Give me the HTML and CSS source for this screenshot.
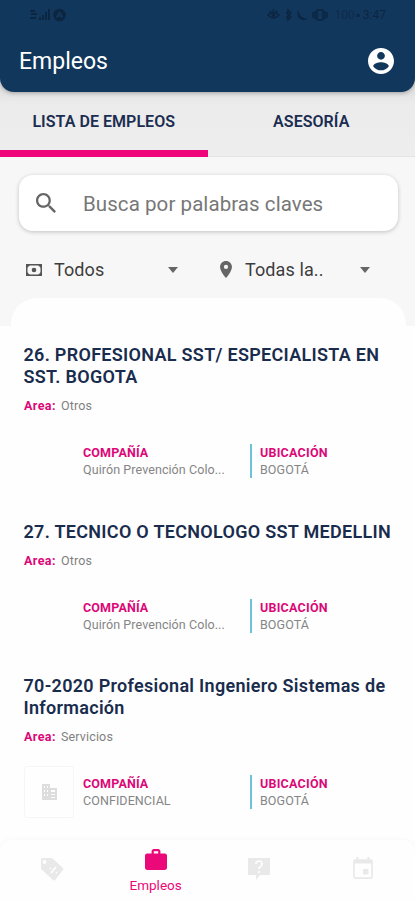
FILE: index.html
```html
<!DOCTYPE html>
<html lang="es">
<head>
<meta charset="utf-8">
<title>Empleos</title>
<link rel="stylesheet" href="styles.css">
</head>
<body>
<div class="app">
  <header class="header">
    <div class="status">
      <svg class="signal" viewBox="0 0 36 14"><path d="M0 2h5v2H0zM1 5h6v2H1zM0 9h6v2H0zM9 9h2v3H9zM12 7h2v5h-2zM15 4h2v8h-2zM18 1h2v11h-2z"/><circle cx="29.500" cy="7" r="6.300"/><path class="cut" d="M26.500 9.500l3-5 3 5M28 8h3"/></svg>
      <span class="status-right">
        <svg class="status-icons" viewBox="0 0 62 14"><path class="line" d="M1 7q5.500-6 11 0q-5.500 6-11 0zM3 3l1 2M10 3L9 5M6.500 1v2M19 4l5 5-3 3V2l3 3-5 5M46 4v6M60 4v6M48 3v8M58 3v8M50 2h6v10h-6z"/><circle cx="6.500" cy="7" r="2"/><path d="M32 2a6 6 0 1 0 9 8a7 7 0 0 1-9-8z"/></svg>
        <span class="battery">100</span><span class="clock">▪ 3:47</span>
      </span>
    </div>
    <div class="titlebar">
      <h1>Empleos</h1>
      <svg class="account" viewBox="2 2 20 20"><path d="M12 2C6.480 2 2 6.480 2 12s4.480 10 10 10 10-4.480 10-10S17.520 2 12 2zm0 3c1.660 0 3 1.340 3 3s-1.340 3-3 3-3-1.340-3-3 1.340-3 3-3zm0 14.200c-2.500 0-4.710-1.280-6-3.220.030-1.990 4-3.080 6-3.080 1.990 0 5.970 1.090 6 3.080-1.290 1.940-3.500 3.220-6 3.220z"/></svg>
    </div>
  </header>
  <nav class="tabs">
    <div class="tab active"><span>LISTA DE EMPLEOS</span></div>
    <div class="tab"><span>ASESORÍA</span></div>
  </nav>
  <section class="filters">
    <div class="search">
      <svg viewBox="3 3 17.500 17.500"><path d="M15.500 14h-.790l-.280-.270C15.410 12.590 16 11.110 16 9.500 16 5.910 13.090 3 9.500 3S3 5.910 3 9.500 5.910 16 9.500 16c1.610 0 3.090-.590 4.230-1.570l.270.280v.790l5 4.990L20.490 19l-4.990-5zm-6 0C7.010 14 5 11.990 5 9.500S7.010 5 9.500 5 14 7.010 14 9.500 11.990 14 9.500 14z"/></svg>
      <span>Busca por palabras claves</span>
    </div>
    <div class="selects">
      <div class="select">
        <svg class="money" viewBox="0 0 16 12"><path fill-rule="evenodd" d="M0 0h16v12H0zM1.500 1.500v9h13v-9z"/><path d="M1 1h3L1 4zM15 1v3l-3-3zM1 11V8l3 3zM15 11h-3l3-3z"/><circle cx="8" cy="6" r="2.300"/></svg>
        <span>Todos</span><i class="caret"></i>
      </div>
      <div class="select place">
        <svg class="pin" viewBox="5 2 14 20"><path d="M12 2C8.130 2 5 5.130 5 9c0 5.250 7 13 7 13s7-7.750 7-13c0-3.870-3.130-7-7-7zm0 9.500a2.500 2.500 0 0 1 0-5 2.500 2.500 0 0 1 0 5z"/></svg>
        <span>Todas la..</span><i class="caret"></i>
      </div>
    </div>
    <div class="sheet-top"></div>
  </section>
  <main class="jobs">
    <article class="job">
      <h2>26. PROFESIONAL SST/ ESPECIALISTA EN<br>SST. BOGOTA</h2>
      <p class="area"><b>Area:</b><span>Otros</span></p>
      <div class="details">
        <div class="logo"></div>
        <div class="company"><b>COMPAÑÍA</b><span>Quirón Prevención Colo...</span></div>
        <div class="location"><b>UBICACIÓN</b><span>BOGOTÁ</span></div>
      </div>
    </article>
    <article class="job">
      <h2>27. TECNICO O TECNOLOGO SST MEDELLIN</h2>
      <p class="area"><b>Area:</b><span>Otros</span></p>
      <div class="details">
        <div class="logo"></div>
        <div class="company"><b>COMPAÑÍA</b><span>Quirón Prevención Colo...</span></div>
        <div class="location"><b>UBICACIÓN</b><span>BOGOTÁ</span></div>
      </div>
    </article>
    <article class="job">
      <h2>70-2020 Profesional Ingeniero Sistemas de<br>Información</h2>
      <p class="area"><b>Area:</b><span>Servicios</span></p>
      <div class="details">
        <div class="logo framed"><svg viewBox="0 0 15 16"><path fill-rule="evenodd" d="M0 0h8v4h7v12H0zM2 2v2h1V2zm3 0v2h1V2zM2 6v2h1V6zm3 0v2h1V6zM2 10v2h1v-2zm3 0v2h1v-2zM9 6v2h4V6zm0 4v1h4v-1zm0 3v1h4v-1z"/></svg></div>
        <div class="company"><b>COMPAÑÍA</b><span>CONFIDENCIAL</span></div>
        <div class="location"><b>UBICACIÓN</b><span>BOGOTÁ</span></div>
      </div>
    </article>
  </main>
  <footer class="bottom">
    <div class="item"><svg class="tag" viewBox="0 0 24 24"><path fill-rule="evenodd" d="M2 1h10l11 10q1 1 0 2l-8 10q-1 1-2 0L1 12V2q0-1 1-1zM4.500 3a2 2 0 1 0 0 4 2 2 0 0 0 0-4z"/><path class="mark" d="M11 16l5-6M10 11l1 1M16 15l1 1"/></svg></div>
    <div class="item current"><svg class="bag" viewBox="2 2 20 19"><path fill-rule="evenodd" d="M20 6h-4V4c0-1.110-.890-2-2-2h-4c-1.110 0-2 .890-2 2v2H4c-1.110 0-2 .890-2 2v11c0 1.110.890 2 2 2h16c1.110 0 2-.890 2-2V8c0-1.110-.890-2-2-2zm-6 0h-4V4h4v2z"/></svg><span>Empleos</span></div>
    <div class="item"><svg class="help" viewBox="0 0 24 24"><path d="M1 1h22v17H13l-4 5v-5H1z"/><path class="mark" d="M9 7q0-3 3-3t3 3q0 2-3 4v1M12 14v2"/></svg></div>
    <div class="item"><svg class="calendar" viewBox="3 1 18 20"><path d="M16 1v2H8V1H6v2H5c-1.110 0-2 .900-2 2v14c0 1.100.890 2 2 2h14c1.100 0 2-.900 2-2V5c0-1.100-.900-2-2-2h-1V1h-2zm3.500 18.500h-15V7h15v12.500zM12 12h5v5h-5z"/></svg></div>
  </footer>
</div>
</body>
</html>
```
FILE: styles.css
```css
* { box-sizing: border-box; }
body { margin: 0; background: #fefefe; font-family: Roboto, sans-serif; }
h1, h2, p { margin: 0; }
svg { display: block; fill: currentColor; flex: none; }
.app { width: 415px; height: 900px; overflow: hidden; display: flex; flex-direction: column; }

.header { height: 92px; flex: none; background: #12375c; border-radius: 0 0 14px 14px; box-shadow: 0 1px 4px rgba(0,0,0,.3); z-index: 1; color: #fff; }
.status { height: 30px; padding: 8px 29px 0 30px; display: flex; justify-content: space-between; color: #0c2642; font-size: 12px; line-height: 14px; }
.signal { width: 36px; height: 14px; }
.cut { fill: none; stroke: #12375c; stroke-width: 1.500; }
.status-right { display: flex; }
.status-icons { width: 62px; height: 14px; margin-right: 5px; }
.line { fill: none; stroke: currentColor; stroke-width: 1.500; }
.battery { opacity: .65; }
.clock { margin-left: 1px; }
.titlebar { height: 62px; padding: 1px 21px 0 19px; display: flex; align-items: center; justify-content: space-between; }
h1 { font-size: 23px; font-weight: 400; }
.account { width: 26px; height: 26px; margin-top: -1px; }

.tabs { height: 80px; margin-top: -15px; padding-top: 15px; flex: none; display: flex; background: linear-gradient(#e2e2e2 15px, #ebebeb 26px, #eee); border-bottom: 1px solid #e5e5e5; color: #1b2d50; }
.tab { flex: 1; height: 65px; padding-top: 20px; text-align: center; font-size: 16px; line-height: 20px; font-weight: 600; letter-spacing: .05px; border-bottom: 7px solid transparent; }
.tab.active { border-color: #ef047c; }

.filters { height: 169px; flex: none; background: #f7f7f7; padding-top: 18px; display: flex; flex-direction: column; }
.search { height: 56px; flex: none; margin: 0 17px 0 19px; padding: 2px 0 0 17px; display: flex; align-items: center; background: #fff; border-radius: 14px; box-shadow: 0 1px 4px rgba(0,0,0,.22); color: #777; font-size: 20.500px; letter-spacing: .07px; }
.search svg { width: 20px; height: 20px; margin: -2px 27px 0 0; color: #666; }
.selects { height: 67px; flex: none; display: flex; padding: 5px 44px 0 26px; color: #3d3d3d; font-size: 18px; letter-spacing: .1px; }
.select { width: 152px; height: 67px; display: flex; align-items: center; }
.money { width: 16px; height: 12px; margin-right: 12px; color: #555; }
.place { margin-left: 42px; width: 150px; }
.pin { width: 12px; height: 17px; margin-right: 13px; color: #666; }
.caret { margin-left: auto; border: 5px solid transparent; border-top: 6px solid #666; border-bottom: 0; }
.sheet-top { height: 28px; flex: none; margin: 0 9px 0 11px; border-radius: 26px 26px 0 0; background: #fefefe; }

.jobs { height: 514px; flex: none; padding: 18px 15px 0 24px; overflow: hidden; }
.job { height: 177px; }
.job:nth-child(2) { height: 154px; }
h2 { font-size: 18px; line-height: 22px; font-weight: 600; letter-spacing: .3px; color: #192c4d; white-space: nowrap; margin-left: -.5px; }
.area { height: 15px; margin-top: 10px; display: flex; font-size: 12.500px; line-height: 15px; color: #818181; }
.area b { width: 37px; letter-spacing: .4px; }
.area span { letter-spacing: .15px; }
.area b, .details b { color: #dc0877; font-weight: 700; }
.details { display: flex; align-items: center; height: 54px; margin-top: 21px; }
.logo { width: 50px; height: 52px; display: flex; align-items: center; justify-content: center; color: #ddd; }
.framed { border: 1px solid #f6f6f6; border-radius: 3px; }
.logo svg { width: 15px; height: 16px; }
.company, .location { display: flex; flex-direction: column; font-size: 12.500px; line-height: 17px; letter-spacing: .08px; color: #858585; white-space: nowrap; }
.company { width: 176px; padding-left: 9px; }
.company b { letter-spacing: .15px; }
.location { border-left: 2px solid #6cc3d5; padding-left: 8px; }
.location b { letter-spacing: .25px; }

.bottom { height: 60px; flex: none; display: grid; grid-template-columns: repeat(4, 1fr); color: #e9e9e9; background: #fefefe; box-shadow: 0 -1px 4px rgba(0,0,0,.03); border-radius: 12px 12px 0 0; }
.item { display: flex; flex-direction: column; align-items: center; padding-top: 17px; }
.item.current { padding-top: 9px; color: #eb0878; font-size: 13.500px; line-height: 16px; gap: 7px; }
.tag, .help { width: 24px; height: 24px; }
.bag { width: 22px; height: 21px; }
.calendar { width: 20px; height: 22px; }
.mark { fill: none; stroke: #fff; stroke-width: 1.600; }
```
